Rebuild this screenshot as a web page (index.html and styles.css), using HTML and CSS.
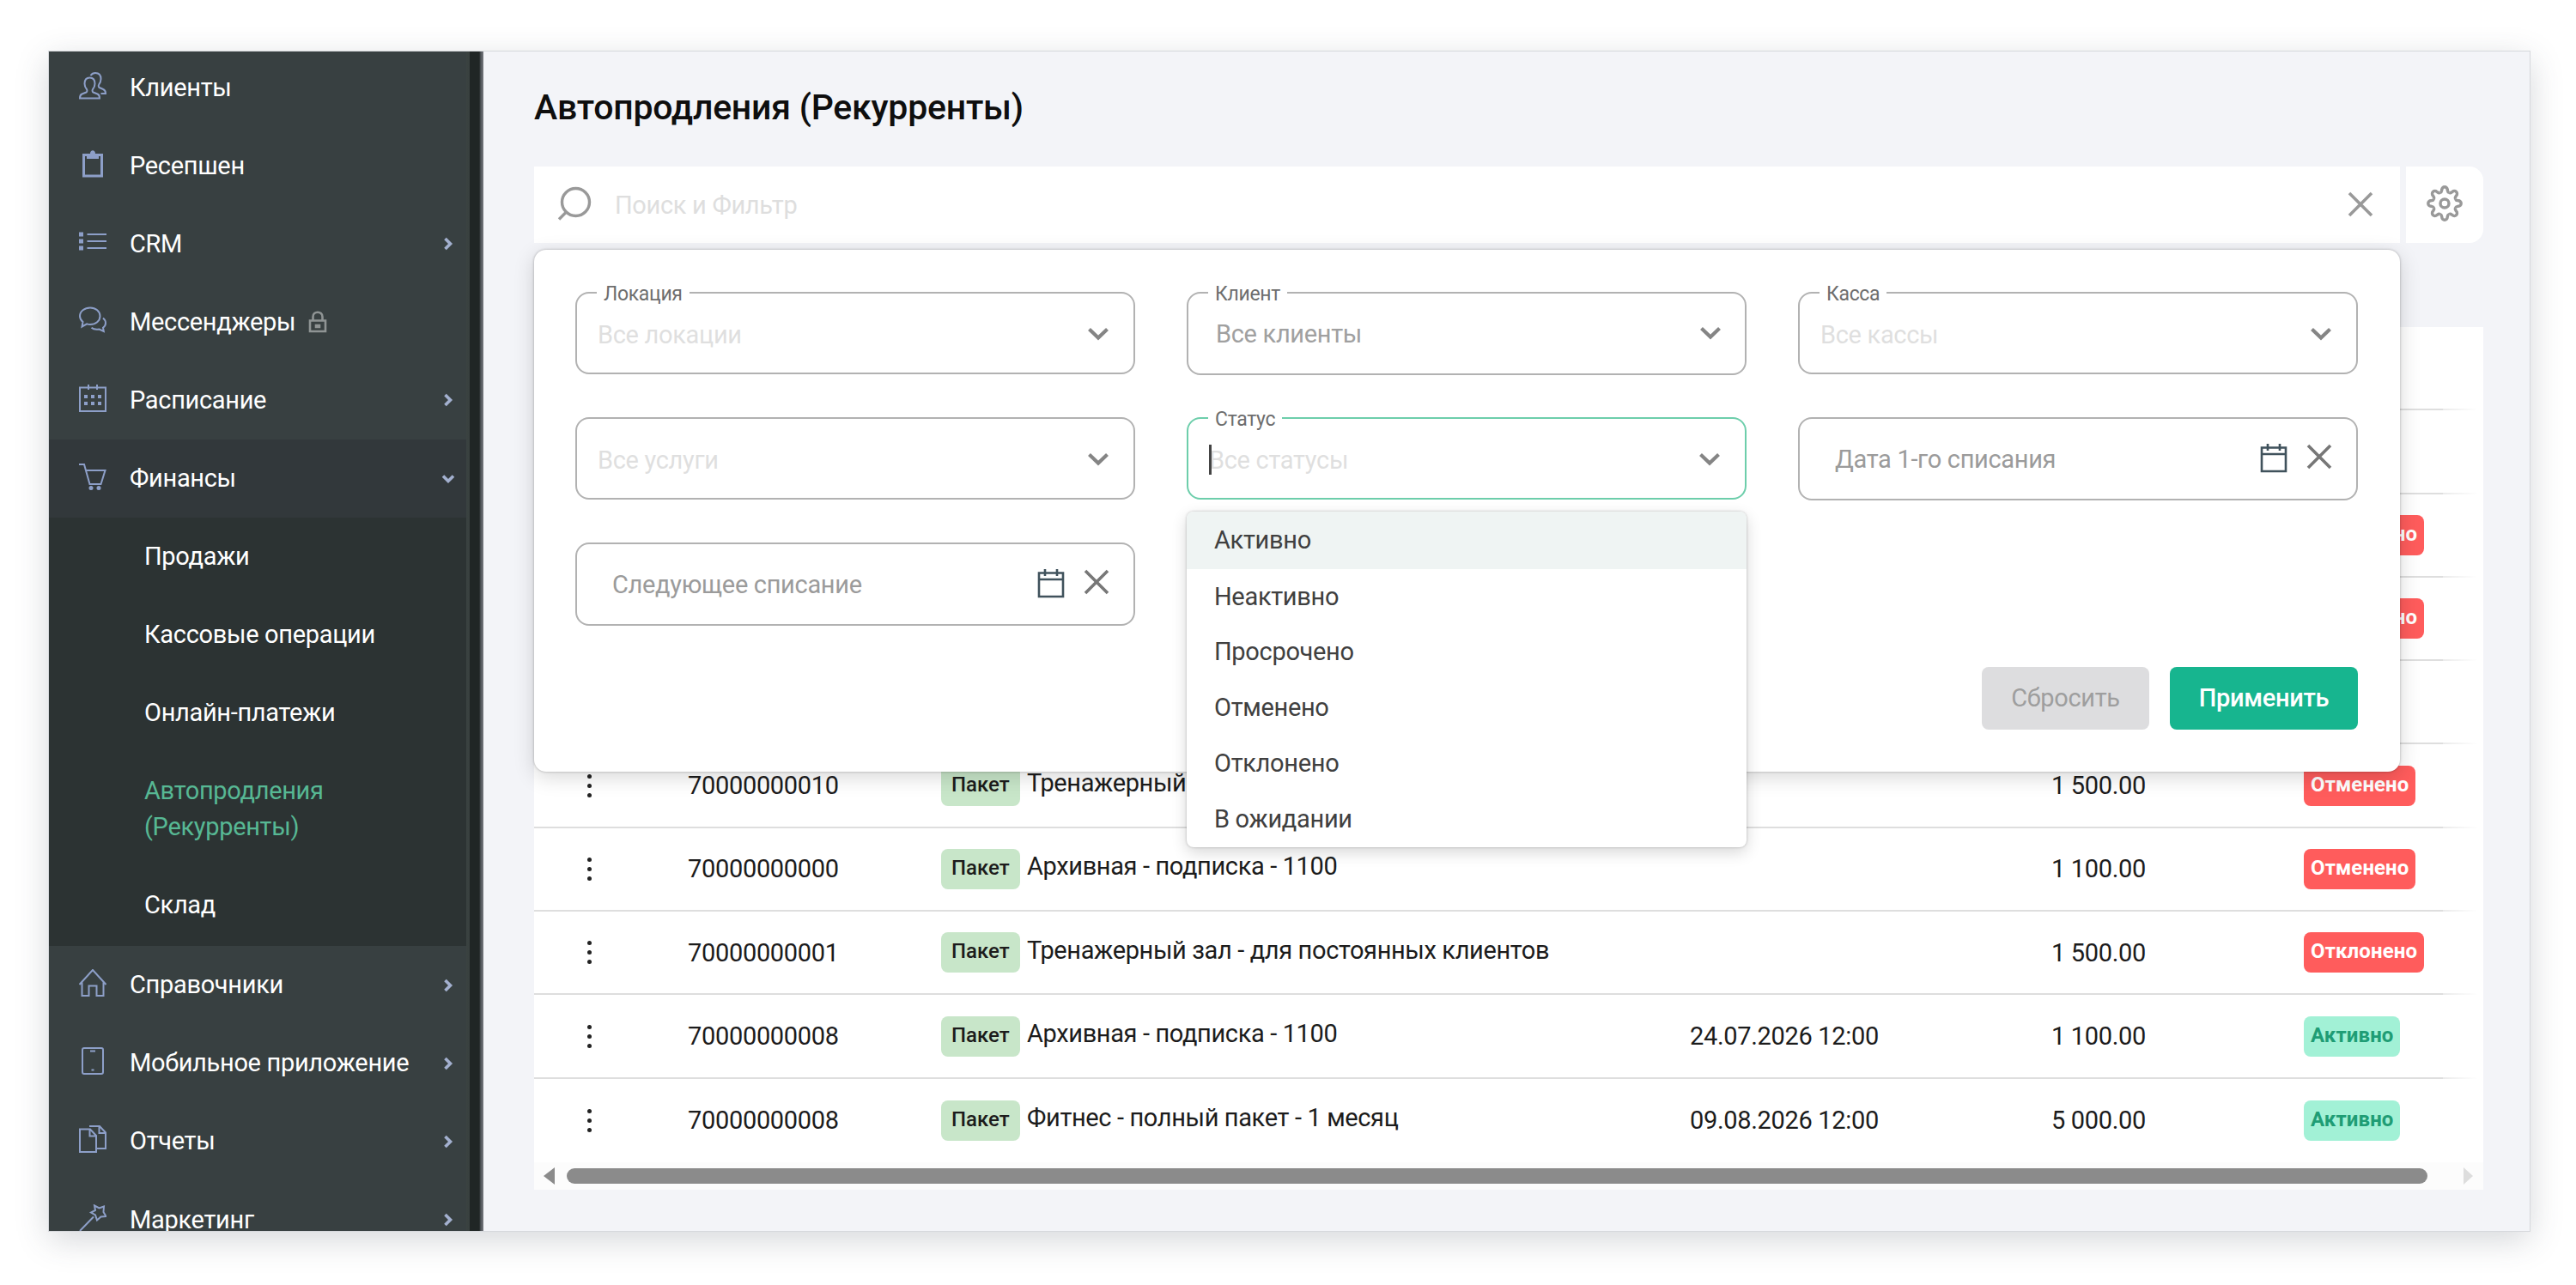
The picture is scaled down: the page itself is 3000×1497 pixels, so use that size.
FILE: index.html
```html
<!DOCTYPE html>
<html lang="ru">
<head>
  <meta charset="UTF-8">
  <meta name="viewport" content="width=device-width, initial-scale=1.0">
  <title>Автопродления (Рекурренты)</title>
  <link rel="stylesheet" href="styles.css">
</head>
<body>

<!-- Иконки -->
<svg class="sprite">
  <symbol id="chev-right" viewBox="0 0 12 18"><path d="M2.5 3l6 6-6 6" stroke-width="3.6"/></symbol>
  <symbol id="chev-down" viewBox="0 0 26 16"><path d="M2.5 2.5L13 12.5l10.500-10" stroke-width="4.2"/></symbol>
  <symbol id="close" viewBox="0 0 30 30"><path d="M2 2l26 26M28 2L2 28" stroke-width="3.6"/></symbol>
  <symbol id="calendar" viewBox="0 0 32 34"><path d="M2 4.500h28v27.500H2zM2 12h28M9 0v8M23 0v8" stroke-width="2.6"/></symbol>
  <path id="tooth" d="M-5.200-12.500C-3.200-13.300-3.500-14.500-3.200-16a3.200 3.200 0 0 1 6.400 0C3.500-14.500 3.200-13.300 5.200-12.500"/>
</svg>

<div class="app">
  <aside class="sidebar">
    <nav class="menu">
      <a class="item">
        <svg class="icon" viewBox="0 0 32 32"><path d="M12.500 6.500c-4 0-6 3-6 7 0 3 1.200 5 2.500 6.500.8 1 .5 3-.5 3.500l-5 2c-2 .8-2.500 2-2.500 5h23c0-3-.5-4.200-2.500-5l-5-2c-1-.5-1.300-2.500-.5-3.500 1.300-1.500 2.500-3.500 2.500-6.500 0-4-2-7-6-7zM13.500 4c1.200-1.800 3-3 5.500-3 4.500 0 6.500 3 6.500 7 0 3-1.200 5-2.300 6.500-.8 1-.5 3 .5 3.500l4.500 2c2 .8 2.800 2 2.800 5h-5.500"/></svg>
        <span>Клиенты</span>
      </a>
      <a class="item">
        <svg class="icon" viewBox="0 0 32 32"><path d="M5.500 5.500h21v24.500h-21z" stroke-width="3"/><path class="fill" d="M9 4h4c0-5 6-5 6 0h4v6H9z"/></svg>
        <span>Ресепшен</span>
      </a>
      <a class="item">
        <svg class="icon" viewBox="0 0 32 32"><path d="M9.500 7H32M9.500 15H32M9.500 23H32"/><path class="fill" d="M0 4.500h5v5H0zM0 12.500h5v5H0zM0 20.500h5v5H0z"/></svg>
        <span>CRM</span>
        <svg class="arrow"><use href="#chev-right"/></svg>
      </a>
      <a class="item">
        <svg class="icon" viewBox="0 0 32 32"><path d="M13 1.500c6.500 0 11.500 4.200 11.500 9.800S19.500 21 13 21c-1.300 0-2.600-.2-3.800-.6L3.500 23.500l1-5.500C2.300 16.300 1 14 1 11.300 1 5.700 6.500 1.500 13 1.500zM28 13.500c1.800 1.500 3 3.400 3 5.700 0 2.400-1.200 4.300-3 5.600l.8 4.200-5.300-2.500c-1 .2-2 .3-3 .3-2.300 0-4.500-.8-6-2"/></svg>
        <span>Мессенджеры</span>
        <svg class="lock" viewBox="0 0 22 26"><path d="M2 11.500h18V24H2zM5.500 11V7c0-7 11-7 11 0v4M9 17h4v2H9z"/></svg>
      </a>
      <a class="item">
        <svg class="icon" viewBox="0 0 32 32"><path d="M1 3.500h30V31H1zM11 0v6M21 0v6"/><path class="fill" d="M6 12h4v4H6zM14 12h4v4h-4zM22 12h4v4h-4zM6 20h4v4H6zM14 20h4v4h-4zM22 20h4v4h-4z"/></svg>
        <span>Расписание</span>
        <svg class="arrow"><use href="#chev-right"/></svg>
      </a>
      <a class="item open">
        <svg class="icon" viewBox="0 0 32 32"><path d="M0 2h6l6.500 23h13L30.500 9H8"/><circle class="fill" cx="14" cy="29.500" r="2.500"/><circle class="fill" cx="23" cy="29.500" r="2.500"/></svg>
        <span>Финансы</span>
        <svg class="arrow down" viewBox="0 0 18 12"><path d="M3 2.500l6 6 6-6" stroke-width="3.600"/></svg>
      </a>
      <div class="submenu">
        <a class="item">Продажи</a>
        <a class="item">Кассовые операции</a>
        <a class="item">Онлайн-платежи</a>
        <a class="item active">Автопродления<br>(Рекурренты)</a>
        <a class="item">Склад</a>
      </div>
      <a class="item">
        <svg class="icon" viewBox="0 0 32 32"><path d="M0.500 18L16 1l15.500 17M3.500 15.500V31h8V19.500h9V31h8V15.500"/></svg>
        <span>Справочники</span>
        <svg class="arrow"><use href="#chev-right"/></svg>
      </a>
      <a class="item">
        <svg class="icon" viewBox="0 0 32 32"><rect x="4" y="1" width="24" height="30" rx="2"/><path d="M13 4.500h6M14.500 26.500h3"/></svg>
        <span>Мобильное приложение</span>
        <svg class="arrow"><use href="#chev-right"/></svg>
      </a>
      <a class="item">
        <svg class="icon" viewBox="0 0 32 32"><path d="M1 4.500h12l7 7.500v19H1zM12.500 4.500v8H20M12 1h12l7 7.500V27H20.500M23.500 1v8H31"/></svg>
        <span>Отчеты</span>
        <svg class="arrow"><use href="#chev-right"/></svg>
      </a>
      <a class="item">
        <svg class="icon" viewBox="0 0 32 32"><path d="M1 31l16-16.500M18 1.500l5.500 3 5.500-2-.5 6.500 3 5-6 .5-4.500 4-2-6-5-3 5-2.500z"/></svg>
        <span>Маркетинг</span>
        <svg class="arrow"><use href="#chev-right"/></svg>
      </a>
    </nav>
  </aside>

  <main class="content">
    <h1>Автопродления (Рекурренты)</h1>

    <div class="toolbar">
      <div class="search">
        <svg class="search-icon" viewBox="0 0 40 40"><circle cx="21.500" cy="18.500" r="16"/><path d="M10.500 30L2 38.500"/></svg>
        <span>Поиск и Фильтр</span>
        <svg class="close"><use href="#close"/></svg>
      </div>
      <button class="settings">
        <svg viewBox="-21 -21 42 42">
          <use href="#tooth"/>
          <use href="#tooth" transform="rotate(45)"/>
          <use href="#tooth" transform="rotate(90)"/>
          <use href="#tooth" transform="rotate(135)"/>
          <use href="#tooth" transform="rotate(180)"/>
          <use href="#tooth" transform="rotate(225)"/>
          <use href="#tooth" transform="rotate(270)"/>
          <use href="#tooth" transform="rotate(315)"/>
          <circle r="5"/>
        </svg>
      </button>
    </div>

    <!-- Панель фильтров поверх таблицы -->
    <section class="filters">
      <div class="fields">
        <div class="field">
          <label>Локация</label>
          <span>Все локации</span>
          <svg class="chev"><use href="#chev-down"/></svg>
        </div>
        <div class="field client">
          <label>Клиент</label>
          <span>Все клиенты</span>
          <svg class="chev"><use href="#chev-down"/></svg>
        </div>
        <div class="field">
          <label>Касса</label>
          <span>Все кассы</span>
          <svg class="chev"><use href="#chev-down"/></svg>
        </div>
        <div class="field">
          <span>Все услуги</span>
          <svg class="chev"><use href="#chev-down"/></svg>
        </div>
        <div class="field focused">
          <label>Статус</label>
          <i class="caret"></i>
          <span>Все статусы</span>
          <svg class="chev"><use href="#chev-down"/></svg>
          <ul class="options">
            <li class="selected">Активно</li>
            <li>Неактивно</li>
            <li>Просрочено</li>
            <li>Отменено</li>
            <li>Отклонено</li>
            <li>В ожидании</li>
          </ul>
        </div>
        <div class="field date">
          <span>Дата 1-го списания</span>
          <svg class="cal"><use href="#calendar"/></svg>
          <svg class="close"><use href="#close"/></svg>
        </div>
        <div class="field date">
          <span>Следующее списание</span>
          <svg class="cal"><use href="#calendar"/></svg>
          <svg class="close"><use href="#close"/></svg>
        </div>
      </div>
      <div class="actions">
        <button class="btn reset">Сбросить</button>
        <button class="btn apply">Применить</button>
      </div>
    </section>

    <div class="table">
      <div class="row"></div>
      <div class="row"></div>
      <div class="row"><b class="status red">Отклонено</b></div>
      <div class="row"><b class="status red">Отклонено</b></div>
      <div class="row"></div>
      <div class="row">
        <i class="more"></i><span class="phone">70000000010</span>
        <b class="tag">Пакет</b><span class="name">Тренажерный зал</span>
        <span class="next"></span><span class="sum">1 500.00</span><b class="status red">Отменено</b>
      </div>
      <div class="row">
        <i class="more"></i><span class="phone">70000000000</span>
        <b class="tag">Пакет</b><span class="name">Архивная - подписка - 1100</span>
        <span class="next"></span><span class="sum">1 100.00</span><b class="status red">Отменено</b>
      </div>
      <div class="row">
        <i class="more"></i><span class="phone">70000000001</span>
        <b class="tag">Пакет</b><span class="name">Тренажерный зал - для постоянных клиентов</span>
        <span class="next"></span><span class="sum">1 500.00</span><b class="status red">Отклонено</b>
      </div>
      <div class="row">
        <i class="more"></i><span class="phone">70000000008</span>
        <b class="tag">Пакет</b><span class="name">Архивная - подписка - 1100</span>
        <span class="next">24.07.2026 12:00</span><span class="sum">1 100.00</span><b class="status green">Активно</b>
      </div>
      <div class="row last">
        <i class="more"></i><span class="phone">70000000008</span>
        <b class="tag">Пакет</b><span class="name">Фитнес - полный пакет - 1 месяц</span>
        <span class="next">09.08.2026 12:00</span><span class="sum">5 000.00</span><b class="status green">Активно</b>
      </div>
      <div class="scrollbar">
        <i class="left"></i>
        <div class="thumb"></div>
        <i class="right"></i>
      </div>
    </div>
  </main>
</div>

</body>
</html>
```
FILE: styles.css
```css
* {
  box-sizing: border-box;
}
body {
  margin: 0;
  height: 1497px;
  padding: 60px 54px 63px 57px;
  background: #fff;
  font-family: Roboto, sans-serif;
  font-size: 29px;
  line-height: 42px;
  letter-spacing: -0.320px;
  color: #1c1c1c;
  overflow: hidden;
}
svg {
  fill: none;
  stroke: currentColor;
  flex: none;
}
.sprite {
  position: absolute;
  width: 0;
  height: 0;
}
.app {
  display: flex;
  height: 1374px;
  background: #f3f4f8;
  box-shadow: 0 0 0 1px #d6d8dc, 0 10px 36px rgba(60, 70, 80, 0.22);
}

/* Боковое меню */
.sidebar {
  width: 506px;
  background: linear-gradient(90deg, #384041 486px, #3a4241 486px, #39413f 490px, #202625 490px, #202625 501px, #50555a 503px, #777a80 506px);
  overflow: hidden;
}
.menu {
  width: 486px;
  margin-top: -3.500px;
}
.item {
  display: flex;
  align-items: center;
  height: 91.100px;
  padding: 0 15px 1px 35px;
  color: #fff;
}
.item > span {
  margin-left: 27px;
}
.icon {
  width: 32px;
  height: 32px;
  margin-top: -4px;
  color: #8d9fc8;
  stroke-width: 2;
}
.fill {
  fill: currentColor;
  stroke: none;
}
.lock {
  width: 22px;
  height: 26px;
  margin-left: 15px;
  color: #8f9494;
  stroke-width: 2.600;
}
.arrow {
  width: 12px;
  height: 18px;
  margin: 1px 0 0 auto;
  color: #a3b0cf;
}
.arrow.down {
  width: 18px;
  height: 12px;
  margin-right: -3px;
}
.item.open {
  background: #32383b;
}
.submenu {
  background: #2c3333;
  padding-bottom: 2px;
}
.submenu .item {
  padding-left: 111px;
}
.submenu .item.active {
  height: 132.800px;
  color: #57b894;
}

/* Контент */
.content {
  position: relative;
  flex: 1;
  padding: 0 54px 0 59px;
}
h1 {
  margin: 40px 0 44px;
  font-size: 41px;
  line-height: 50px;
  font-weight: 500;
  letter-spacing: -0.230px;
  color: #0e0e0e;
}
.toolbar {
  display: flex;
  gap: 7px;
  height: 89px;
}
.search {
  display: flex;
  align-items: center;
  flex: 1;
  padding: 0 31px 0 27px;
  background: #fff;
  color: #dedede;
}
.search-icon {
  width: 40px;
  height: 40px;
  margin: -3px 27px 0 0;
  color: #999;
  stroke-width: 3.400;
}
.close {
  width: 30px;
  height: 30px;
  margin: -2px 0 0 auto;
  color: #999;
}
.settings {
  width: 90px;
  padding: 0;
  border: none;
  border-radius: 0 16px 16px 0;
  background: #fff;
  color: #999;
}
.settings svg {
  width: 42px;
  height: 42px;
  margin-top: -3px;
  stroke-width: 3.400;
  vertical-align: middle;
}

/* Фильтры */
.filters {
  position: absolute;
  z-index: 1;
  top: 231px;
  left: 59px;
  width: 2173px;
  height: 608px;
  padding: 49px 49px 49px 48px;
  background: #fff;
  border-radius: 14px;
  box-shadow: 0 0 3px rgba(0, 0, 0, 0.3), 0 6px 24px rgba(0, 0, 0, 0.16);
}
.fields {
  display: grid;
  grid-template-columns: repeat(3, 652px);
  grid-auto-rows: 97px;
  gap: 49px 60px;
}
.field {
  position: relative;
  display: flex;
  align-items: center;
  height: 96px;
  padding: 4px 28px 0 24px;
  border: 2px solid #b2b2b2;
  border-radius: 16px;
  color: #dfdfdf;
}
.field label {
  position: absolute;
  top: -19px;
  left: 23px;
  padding: 0 8px;
  background: #fff;
  font-size: 23px;
  line-height: 40px;
  color: #6e6e6e;
}
.chev {
  width: 26px;
  height: 16px;
  margin: -2px 0 0 auto;
  color: #858585;
}
.client {
  height: 97px;
  padding: 0 27px 0 32px;
  color: #a0a0a0;
}
.client .chev {
  margin-top: -1px;
}
.focused {
  border-color: #6dceab;
}
.caret {
  position: absolute;
  left: 24px;
  top: 30px;
  width: 3px;
  height: 35px;
  background: #444;
}
.date {
  height: 97px;
  padding: 0 28px 0 41px;
  color: #9b9b9b;
}
.date .cal {
  width: 32px;
  height: 34px;
  margin: -2px 0 0 auto;
  color: #40525c;
}
.date .close {
  margin: -6px 0 0 22px;
  color: #777;
}
.options {
  position: absolute;
  z-index: 2;
  top: 108px;
  left: -2px;
  width: 652px;
  height: 391px;
  margin: 0;
  padding: 0;
  list-style: none;
  background: #fff;
  border-radius: 8px;
  color: #404040;
  overflow: hidden;
  box-shadow: 0 0 3px rgba(0, 0, 0, 0.25), 0 6px 18px rgba(0, 0, 0, 0.16);
}
.options li {
  height: 64.800px;
  padding: 12px 32px;
}
.options .selected {
  height: 66.500px;
  margin-bottom: -1px;
  background: #eff4f3;
}
.actions {
  display: flex;
  justify-content: flex-end;
  gap: 24px;
  margin-top: 48px;
}
.btn {
  height: 73px;
  padding-bottom: 3px;
  border: none;
  border-radius: 8px;
  font: inherit;
  letter-spacing: inherit;
}
.reset {
  width: 195px;
  background: #dddddf;
  color: #9e9e9e;
}
.apply {
  width: 219px;
  background: #17b58f;
  color: #fff;
  font-weight: 500;
}

/* Таблица */
.table {
  position: relative;
  margin-top: 98px;
  height: 1005px;
  background: #fff;
}
.table::after {
  content: "";
  position: absolute;
  top: 0;
  right: 0;
  width: 47px;
  height: 970px;
  background: linear-gradient(90deg, rgba(255, 255, 255, 0.4), #fff 85%);
}
.row {
  display: grid;
  grid-template-columns: 179px 295px 100px 772px 421px 294px auto;
  align-items: center;
  justify-items: start;
  height: 97.300px;
  border-bottom: 2px solid #dedede;
}
.row.last {
  border: none;
}
.more {
  width: 5px;
  height: 5px;
  margin-left: 62px;
  border-radius: 50%;
  background: #222;
  box-shadow: 0 -11px #222, 0 11px #222;
}
.name {
  margin-top: -6px;
  letter-spacing: -0.370px;
  white-space: nowrap;
}
.tag, .status {
  height: 47px;
  padding: 0 12px;
  border-radius: 8px;
  font-size: 24px;
  line-height: 45px;
  font-weight: 500;
  letter-spacing: 0;
}
.tag {
  background: #c8e6c9;
}
.status {
  grid-column: 7;
  padding: 0 8px;
  font-weight: 700;
  letter-spacing: 0.100px;
}
.red {
  background: #ff5c5c;
  color: #fff;
}
.green {
  background: #a2f1d6;
  color: #1f9d75;
}
.scrollbar {
  display: flex;
  align-items: center;
  height: 32px;
  padding: 0 12px 0 11px;
  background: #fcfcfc;
}
.left, .right {
  border: solid transparent;
  border-width: 10px 0;
}
.left {
  border-right: 13px solid #8b8b8b;
}
.right {
  border-left: 11px solid #ddd;
}
.thumb {
  flex: 1;
  height: 18px;
  margin: 0 42px 0 14px;
  border-radius: 9px;
  background: #8b8b8b;
}
```
